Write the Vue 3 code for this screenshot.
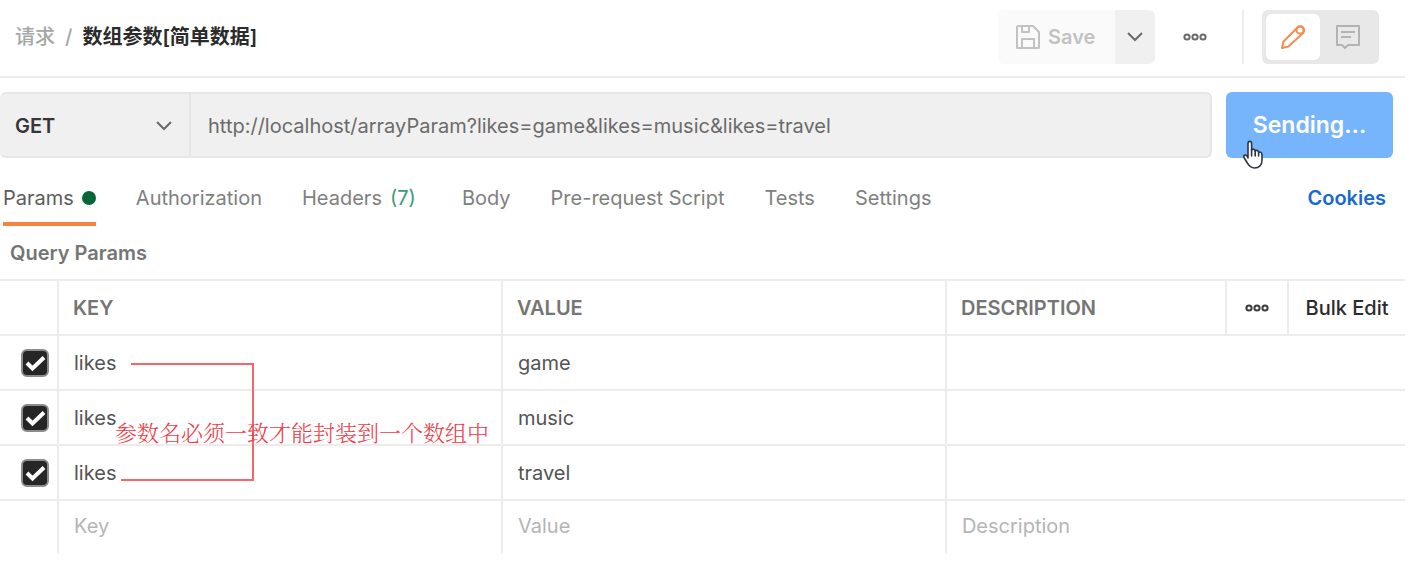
<script setup>
import { ref } from 'vue'

const method = ref('GET')
const url = ref('http://localhost/arrayParam?likes=game&likes=music&likes=travel')
const tabs = [
  { name: 'Params', dot: true, active: true },
  { name: 'Authorization' },
  { name: 'Headers', count: '(7)' },
  { name: 'Body' },
  { name: 'Pre-request Script' },
  { name: 'Tests' },
  { name: 'Settings' },
]
const rows = ref([
  { on: true, key: 'likes', value: 'game', description: '' },
  { on: true, key: 'likes', value: 'music', description: '' },
  { on: true, key: 'likes', value: 'travel', description: '' },
])
</script>

<template>
  <main class="request">
    <header class="top">
      <nav class="crumbs" aria-label="Breadcrumb">
        <a href="#" class="parent">请求</a>
        <span class="slash">/</span>
        <h1>数组参数[简单数据]</h1>
      </nav>
      <div class="actions">
        <div class="save-group">
          <button type="button" class="save" disabled>
            <svg width="24" height="24" viewBox="0 0 24 24" fill="none" stroke="currentColor" stroke-width="2" stroke-linejoin="round" aria-hidden="true">
              <path d="M2 1H17L23 7V23H1V2ZM6 1V7H13V1M6 23V14H18V23" />
            </svg>
            Save
          </button>
          <button type="button" class="save-more" aria-label="Save options">
            <svg width="16" height="10" viewBox="0 0 16 10" fill="none" stroke="currentColor" stroke-width="2" aria-hidden="true">
              <path d="M1 1L8 8L15 1" />
            </svg>
          </button>
        </div>
        <button type="button" class="dots" aria-label="More actions">
          <svg width="24" height="8" viewBox="0 0 24 8" fill="none" stroke="currentColor" stroke-width="2" aria-hidden="true">
            <circle cx="4" cy="4" r="2.6" /><circle cx="12" cy="4" r="2.6" /><circle cx="20" cy="4" r="2.6" />
          </svg>
        </button>
        <div class="view-switch">
          <button type="button" class="view on" aria-label="Edit">
            <svg width="26" height="26" viewBox="0 0 26 26" fill="none" stroke="currentColor" stroke-width="2" stroke-linejoin="round" aria-hidden="true">
              <path d="M2 24L3.500 17.500L17.500 3.500A3.800 3.800 0 0 1 23 9L8.500 22.500Z" />
              <circle cx="20" cy="6" r="3.600" />
            </svg>
          </button>
          <button type="button" class="view" aria-label="Comments">
            <svg width="24" height="24" viewBox="0 0 24 24" fill="none" stroke="currentColor" stroke-width="2" stroke-linejoin="round" aria-hidden="true">
              <path d="M1 1H23V20H12L9 23L6 20H1ZM5 7H19M5 12H15" />
            </svg>
          </button>
        </div>
      </div>
    </header>

    <form class="send-row" @submit.prevent>
      <div class="address">
        <div class="method">
          <select v-model="method" aria-label="Method">
            <option>GET</option>
            <option>POST</option>
          </select>
          <svg width="16" height="10" viewBox="0 0 16 10" fill="none" stroke="currentColor" stroke-width="2" aria-hidden="true">
            <path d="M1 1L8 8L15 1" />
          </svg>
        </div>
        <input v-model="url" type="text" class="url" aria-label="Request URL">
      </div>
      <button type="submit" class="send">
        Sending...
        <svg class="pointer" width="22" height="30" viewBox="0 0 22 30" fill="#fff" stroke="#2b3440" stroke-width="1.600" stroke-linejoin="round" stroke-linecap="round" aria-hidden="true">
          <path d="M6 18V3.500C6 .6 9.600 .6 9.600 3.500V10C10.500 8.500 13 9 13.200 11C14.400 9.800 16.500 10.500 16.600 12.300C18 11.500 20 12.500 20 14.500V20C20 25 17 28 12.500 28C8 28 6.500 25 5 22.500L2 17.500C1 15.500 3.500 14 5 16Z" />
          <path fill="none" d="M9.600 10V16M13.200 11V16M16.600 12.500V16" />
        </svg>
      </button>
    </form>

    <nav class="tabs" aria-label="Request sections">
      <a v-for="tab in tabs" :key="tab.name" href="#" :class="['tab', { active: tab.active }]">
        {{ tab.name }}
        <span v-if="tab.count" class="count">{{ tab.count }}</span>
        <span v-if="tab.dot" class="dot"></span>
      </a>
      <a href="#" class="cookies">Cookies</a>
    </nav>

    <h2>Query Params</h2>

    <div class="grid">
      <table>
        <colgroup>
          <col class="c-check"><col class="c-text"><col class="c-text"><col><col class="c-more"><col class="c-bulk">
        </colgroup>
        <thead>
          <tr>
            <td></td>
            <th scope="col">KEY</th>
            <th scope="col">VALUE</th>
            <th scope="col">DESCRIPTION</th>
            <td class="center">
              <button type="button" class="dots dark" aria-label="Column options">
                <svg width="24" height="8" viewBox="0 0 24 8" fill="none" stroke="currentColor" stroke-width="2" aria-hidden="true">
                  <circle cx="4" cy="4" r="2.600" /><circle cx="12" cy="4" r="2.600" /><circle cx="20" cy="4" r="2.600" />
                </svg>
              </button>
            </td>
            <td class="center"><button type="button" class="bulk">Bulk Edit</button></td>
          </tr>
        </thead>
        <tbody>
          <tr v-for="(row, i) in rows" :key="i">
            <td>
              <label class="check">
                <input v-model="row.on" type="checkbox" :aria-label="`Include parameter ${i + 1}`">
                <svg width="28" height="28" viewBox="0 0 28 28" fill="none" stroke="#fff" stroke-width="4" aria-hidden="true">
                  <path d="M6 14L11.500 19.500L23 8.500" />
                </svg>
              </label>
            </td>
            <td><input v-model="row.key" type="text" aria-label="Key"></td>
            <td><input v-model="row.value" type="text" aria-label="Value"></td>
            <td colspan="3"><input v-model="row.description" type="text" aria-label="Description"></td>
          </tr>
          <tr class="blank">
            <td></td>
            <td><input type="text" placeholder="Key" aria-label="New key"></td>
            <td><input type="text" placeholder="Value" aria-label="New value"></td>
            <td colspan="3"><input type="text" placeholder="Description" aria-label="New description"></td>
          </tr>
        </tbody>
      </table>
      <svg class="bracket" width="134" height="118" viewBox="0 0 134 118" fill="none" stroke="#f5656b" stroke-width="2" aria-hidden="true">
        <path d="M10 1H132V118M0 117H132" />
      </svg>
      <p class="note">参数名必须一致才能封装到一个数组中</p>
    </div>
  </main>
</template>

<style>
body {
  background: #fff;
}
</style>

<style scoped>
.request {
  margin-right: 23px;
  font-family: Inter, "Noto Sans CJK SC", sans-serif;
  font-size: 20px;
  line-height: 24px;
  color: #6b6b6b;
}

.request * {
  box-sizing: border-box;
}

button,
input,
select {
  margin: 0;
  padding: 0;
  border: 0;
  outline: 0;
  background: none;
  font: inherit;
  color: inherit;
}

svg {
  display: block;
  flex: none;
}

a {
  color: inherit;
  text-decoration: none;
}

.top {
  display: flex;
  align-items: center;
  justify-content: space-between;
  height: 78px;
  padding: 0 26px 2px 15px;
  border-bottom: 2px solid #ececec;
}

.crumbs {
  display: flex;
  gap: 10px;
  font-weight: 500;
  color: #a6a6a6;
}

h1 {
  margin: 0;
  font-size: 20px;
  font-weight: 600;
  line-height: 24px;
  color: #2b2b2b;
}

.actions {
  display: flex;
  align-items: center;
}

.save-group {
  display: flex;
  height: 54px;
  border-radius: 6px;
  overflow: hidden;
}

.save {
  display: flex;
  align-items: center;
  gap: 8px;
  width: 117px;
  padding-left: 18px;
  background: #fafafa;
  font-weight: 600;
  color: #c2c2c2;
}

.save-more {
  display: grid;
  place-items: center;
  width: 40px;
  background: #f0f0f0;
  color: #6b6b6b;
}

.dots {
  display: inline-grid;
  place-items: center;
  height: 24px;
  color: #6b6b6b;
}

.dots.dark {
  color: #3c3c3c;
}

.actions .dots {
  margin: 0 35px 0 28px;
}

.view-switch {
  position: relative;
  display: flex;
  gap: 1px;
  height: 54px;
  margin-left: 20px;
  padding: 4px;
  border-radius: 6px;
  background: #e8e8e8;
}

.view-switch::before {
  content: "";
  position: absolute;
  left: -20px;
  top: 0;
  width: 2px;
  height: 100%;
  background: #ececec;
}

.view {
  display: grid;
  place-items: center;
  width: 54px;
  border-radius: 6px;
  color: #b3b3b3;
}

.view.on {
  background: #fff;
  color: #f58b4c;
}

.send-row {
  display: flex;
  gap: 14px;
  margin: 14px 12px 0 0;
}

.address {
  display: flex;
  flex: 1;
  height: 66px;
  border: 2px solid #e6e6e6;
  border-left: 0;
  border-radius: 6px;
  background: #f0f0f0;
}

.method {
  position: relative;
  width: 191px;
  border-right: 2px solid #e6e6e6;
}

.method select {
  width: 100%;
  height: 100%;
  padding: 2px 0 0 15px;
  appearance: none;
  font-weight: 600;
  color: #363636;
}

.method svg {
  position: absolute;
  right: 17px;
  top: 27px;
  pointer-events: none;
}

.url {
  flex: 1;
  min-width: 0;
  padding: 2px 17px 0;
}

.send {
  position: relative;
  width: 167px;
  height: 66px;
  border-radius: 6px;
  background: #76b5fb;
  font-size: 23px;
  font-weight: 600;
  color: #fff;
}

.pointer {
  position: absolute;
  left: 16px;
  top: 48px;
}

.tabs {
  display: flex;
  gap: 40px;
  padding: 28px 19px 0 3px;
  color: #808080;
}

.tab {
  display: flex;
  align-items: center;
  gap: 8px;
  height: 40px;
  padding-bottom: 12px;
  border-bottom: 4px solid transparent;
}

.tab.active {
  border-color: #f5823f;
  color: #5c5c5c;
}

.count {
  margin-right: 6px;
  color: #3d9a7c;
}

.dot {
  width: 14px;
  height: 14px;
  border-radius: 50%;
  background: #066637;
}

.cookies {
  margin-left: auto;
  font-weight: 600;
  color: #1769cf;
}

h2 {
  margin: 0;
  padding: 15px 0 14px 10px;
  font-size: 20px;
  font-weight: 600;
  line-height: 24px;
  color: #757575;
}

.grid {
  position: relative;
}

table {
  width: 100%;
  table-layout: fixed;
  border-spacing: 0;
}

.c-check {
  width: 59px;
}

.c-text {
  width: 31.6%;
}

.c-more {
  width: 62px;
}

.c-bulk {
  width: 116px;
}

th,
td {
  height: 55px;
  padding: 0;
  border-top: 2px solid #ececec;
  border-right: 2px solid #ececec;
  text-align: left;
  vertical-align: middle;
}

th:last-child,
td:last-child {
  border-right: 0;
}

.blank td {
  height: 54px;
  padding-bottom: 2px;
}

th {
  padding-left: 14px;
  font-weight: 600;
  color: #757575;
}

td input[type="text"] {
  display: block;
  width: 100%;
  height: 48px;
  padding: 0 15px;
  color: #545454;
}

td input::placeholder {
  color: #b5b5b5;
  opacity: 1;
}

.center {
  text-align: center;
}

.center .dots {
  vertical-align: middle;
}

.bulk {
  font-weight: 500;
  color: #2b2b2b;
}

.check {
  position: relative;
  display: block;
  width: 28px;
  height: 28px;
  margin-left: 21px;
}

.check input {
  display: block;
  width: 28px;
  height: 28px;
  appearance: none;
  border: 2px solid #8c8c8c;
  border-radius: 6px;
}

.check input:checked {
  background: #262626;
}

.check svg {
  position: absolute;
  inset: 0;
  pointer-events: none;
}

.bracket {
  position: absolute;
  left: 121px;
  top: 84px;
  pointer-events: none;
}

.note {
  position: absolute;
  left: 115px;
  top: 139px;
  margin: 0;
  font-family: "Noto Serif CJK SC", "Noto Sans CJK SC", serif;
  font-size: 22px;
  font-weight: 300;
  line-height: 28px;
  color: #f23a45;
  white-space: nowrap;
  pointer-events: none;
}
</style>
